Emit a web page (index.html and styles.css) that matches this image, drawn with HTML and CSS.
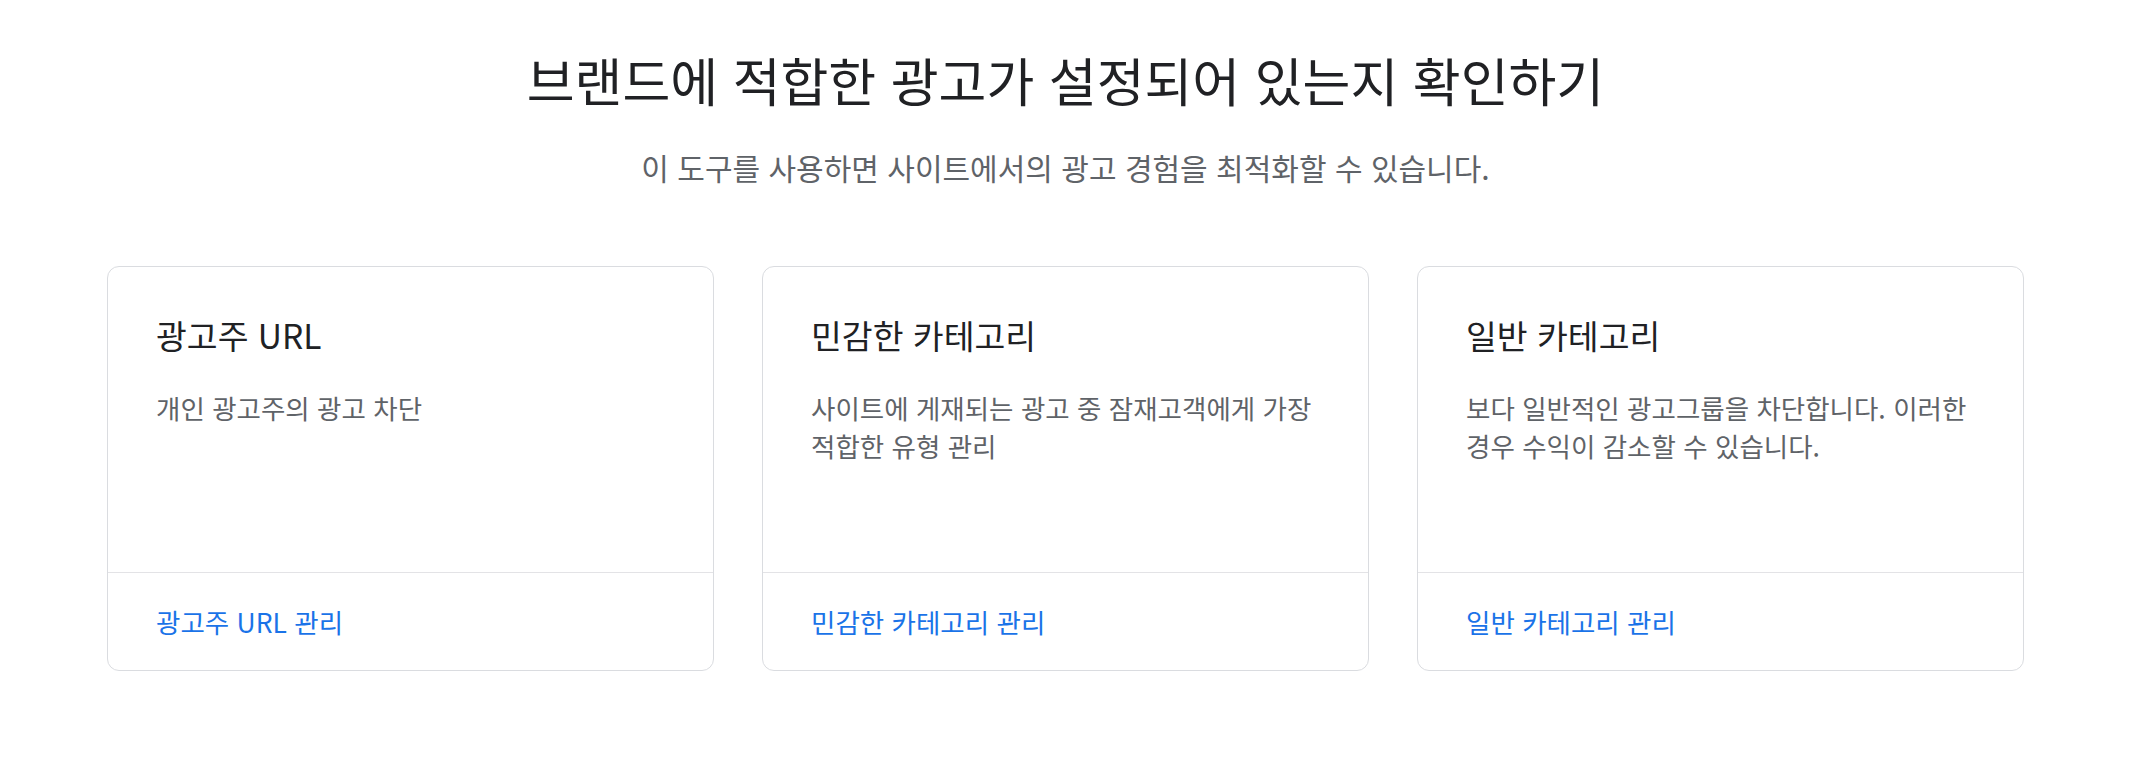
FILE: index.html
```html
<!DOCTYPE html>
<html lang="ko">
<head>
<meta charset="utf-8">
<title>브랜드에 적합한 광고</title>
<link rel="stylesheet" href="styles.css">
</head>
<body>
<main class="page">
  <header class="intro">
    <h1 class="headline">브랜드에 적합한 광고가 설정되어 있는지 확인하기</h1>
    <p class="lead">이 도구를 사용하면 사이트에서의 광고 경험을 최적화할 수 있습니다.</p>
  </header>
  <section class="cards">
    <article class="card">
      <div class="card-body">
        <h2 class="card-title">광고주 URL</h2>
        <p class="card-text">개인 광고주의 광고 차단</p>
      </div>
      <div class="card-footer"><a class="card-link" href="#">광고주 URL 관리</a></div>
    </article>
    <article class="card">
      <div class="card-body">
        <h2 class="card-title">민감한 카테고리</h2>
        <p class="card-text">사이트에 게재되는 광고 중 잠재고객에게 가장 적합한 유형 관리</p>
      </div>
      <div class="card-footer"><a class="card-link" href="#">민감한 카테고리 관리</a></div>
    </article>
    <article class="card">
      <div class="card-body">
        <h2 class="card-title">일반 카테고리</h2>
        <p class="card-text">보다 일반적인 광고그룹을 차단합니다. 이러한 경우 수익이 감소할 수 있습니다.</p>
      </div>
      <div class="card-footer"><a class="card-link" href="#">일반 카테고리 관리</a></div>
    </article>
  </section>
</main>
</body>
</html>
```

FILE: styles.css
```css
* { box-sizing: border-box; }
html, body { margin: 0; padding: 0; background: #ffffff; }
body {
  font-family: "Noto Sans CJK KR", "Noto Sans", sans-serif;
  color: #202124;
  word-break: keep-all;
}
.page {
  width: 1917px;
  margin-left: 107px;
  padding-top: 50px;
}
.intro {
  display: flex;
  flex-direction: column;
  align-items: center;
}
.headline {
  margin: 0;
  font-size: 52px;
  line-height: 60px;
  font-weight: 400;
  color: #202124;
}
.lead {
  margin: 37px 0 0;
  font-size: 30px;
  line-height: 40px;
  font-weight: 400;
  color: #5f6368;
}
.cards {
  margin-top: 79px;
  display: grid;
  grid-template-columns: repeat(3, 1fr);
  column-gap: 48px;
}
.card {
  border: 1px solid #dadce0;
  border-radius: 12px;
  display: flex;
  flex-direction: column;
  height: 405px;
}
.card-body {
  flex: 1;
  padding: 46px 48px 0 48px;
}
.card-title {
  margin: 0;
  font-size: 33.5px;
  line-height: 44px;
  font-weight: 400;
  color: #202124;
}
.card-text {
  margin: 32px 0 0;
  font-size: 26.5px;
  line-height: 38px;
  color: #5f6368;
}
.card-footer {
  border-top: 1px solid #e3e3e6;
  height: 98px;
  padding: 0 48px;
  display: flex;
  align-items: center;
}
.card-link {
  font-size: 26.5px;
  line-height: 36px;
  font-weight: 400;
  color: #1a73e8;
  text-decoration: none;
}
```
